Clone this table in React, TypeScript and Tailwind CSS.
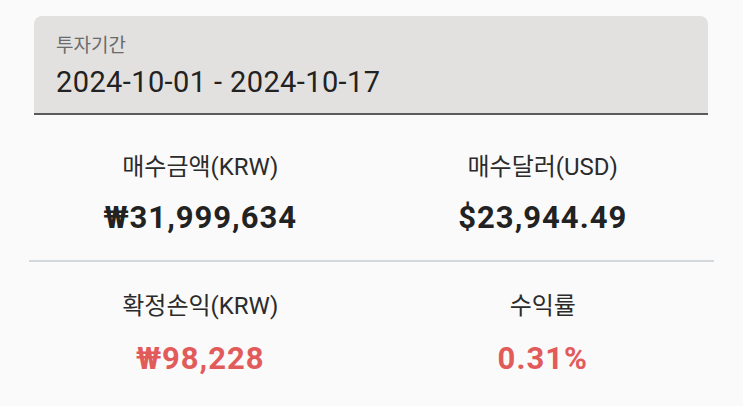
const fontStack = "font-['Roboto','Noto_Sans_CJK_KR',sans-serif]"

interface StatProps {
  label: string
  value: string
  tone?: 'plain' | 'loss'
}

const Stat = (props: StatProps) => {
  const { label, value, tone = 'plain' } = props
  const valueColor = tone === 'loss' ? 'text-[#e25b5b]' : 'text-[#222222]'
  return (<div className="flex flex-col items-center">
    <span className="text-[24px] leading-[28px] text-[#2b2b2b]">{label}</span>
    <span className={`text-[31px] leading-[36px] font-bold tracking-[1px] ${valueColor}`}>{value}</span>
  </div>)
}

const App = () => {
  return (<div className={`w-[743px] h-[406px] bg-[#fafafa] pt-4 overflow-hidden ${fontStack}`}>
    <div className="ml-[34px] w-[674px] h-[99px] bg-[#e2e1e0] rounded-t-[8px] border-b-2 border-[#5a5a5a] pl-[22px] pt-[19px]">
      <div className="text-[19px] leading-[22px] text-[#6b6b6b]">투자기간</div>
      <div className="text-[29px] leading-[36px] tracking-[0.4px] text-[#222222] mt-[7px]">2024-10-01 - 2024-10-17</div>
    </div>

    <div className="mx-[29px]">
      <div className="grid grid-cols-2 pt-[38px] pb-[24px] border-b-2 border-[#d3d8dd] [&>div>span:last-child]:mt-[19px]">
        <Stat label="매수금액(KRW)" value="₩31,999,634" />
        <Stat label="매수달러(USD)" value="$23,944.49" />
      </div>
      <div className="grid grid-cols-2 pt-[30px] [&>div>span:last-child]:mt-[21px]">
        <Stat label="확정손익(KRW)" value="₩98,228" tone="loss" />
        <Stat label="수익률" value="0.31%" tone="loss" />
      </div>
    </div>
  </div>)
}

export default App
